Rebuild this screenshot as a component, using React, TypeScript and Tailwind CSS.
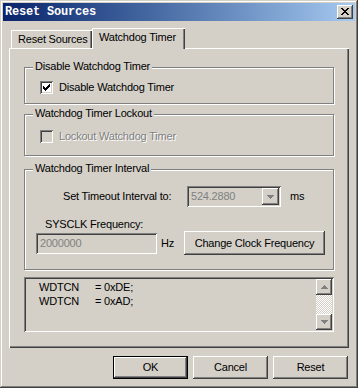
import React from "react";

const FONT = { fontFamily: '"Liberation Sans", Arial, sans-serif' };

const raised =
  "shadow-[inset_-1px_-1px_#404040,inset_1px_1px_#ffffff,inset_-2px_-2px_#808080,inset_2px_2px_#d4d0c8]";
const sunken =
  "shadow-[inset_1px_1px_#808080,inset_-1px_-1px_#ffffff,inset_2px_2px_#404040,inset_-2px_-2px_#d4d0c8]";

function CheckMark({ color }: { color: string }) {
  return (
    <svg width="13" height="13" viewBox="0 0 13 13" className="absolute left-0 top-0">
      <path
        fill={color}
        d="M3 5h1v3h-1z M4 6h1v3h-1z M5 7h1v3h-1z M6 6h1v3h-1z M7 5h1v3h-1z M8 4h1v3h-1z M9 3h1v3h-1z"
      />
    </svg>
  );
}

function Checkbox({ checked, disabled }: { checked?: boolean; disabled?: boolean }) {
  return (
    <div
      className={`relative w-[13px] h-[13px] shrink-0 ${disabled ? "bg-[#d4d0c8]" : "bg-white"} ${sunken}`}
    >
      {checked && <CheckMark color={disabled ? "#808080" : "#000"} />}
    </div>
  );
}

function Arrow({ dir, color }: { dir: "up" | "down"; color: string }) {
  const d =
    dir === "down"
      ? "M0 0h7v1h-7z M1 1h5v1h-5z M2 2h3v1h-3z M3 3h1v1h-1z"
      : "M3 0h1v1h-1z M2 1h3v1h-3z M1 2h5v1h-5z M0 3h7v1h-7z";
  return (
    <svg width="7" height="4" viewBox="0 0 7 4">
      <path fill={color} d={d} />
    </svg>
  );
}

function Group({
  title,
  className,
  children,
}: {
  title: string;
  className: string;
  children?: React.ReactNode;
}) {
  return (
    <div
      className={`relative border border-[#808080] shadow-[1px_1px_0_#ffffff,inset_1px_1px_0_#ffffff] ${className}`}
    >
      <span className="absolute left-[8px] top-[-8px] px-[2px] bg-[#d4d0c8] text-[11px] leading-[13px] text-black whitespace-nowrap">
        {title}
      </span>
      {children}
    </div>
  );
}

function Button({
  children,
  isDefault,
  className = "",
}: {
  children: React.ReactNode;
  isDefault?: boolean;
  className?: string;
}) {
  return (
    <div
      className={`flex items-center justify-center bg-[#d4d0c8] text-[11px] text-black ${
        isDefault
          ? "shadow-[inset_0_0_0_1px_#000000,inset_-2px_-2px_#404040,inset_2px_2px_#ffffff,inset_-3px_-3px_#808080]"
          : raised
      } ${className}`}
    >
      {children}
    </div>
  );
}

export default function App() {
  return (
    <div
      style={FONT}
      className="w-[358px] h-[388px] bg-[#d4d0c8] p-[3px] flex flex-col tracking-[-0.2px] shadow-[inset_-1px_-1px_#404040,inset_1px_1px_#d4d0c8,inset_-2px_-2px_#808080,inset_2px_2px_#ffffff]"
    >
      {/* Title bar */}
      <div className="h-[18px] flex items-center justify-between bg-gradient-to-r from-[#0a246a] to-[#a6caf0] pl-[2px] pr-[2px]">
        <span
          className="text-white font-bold text-[12px] leading-[18px] tracking-[-0.2px]"
          style={{ fontFamily: '"Liberation Mono", "Courier New", monospace' }}
        >
          Reset Sources
        </span>
        <div className={`relative w-[16px] h-[14px] bg-[#d4d0c8] ${raised}`}>
          <svg width="8" height="7" viewBox="0 0 8 7" className="absolute left-[4px] top-[3px]">
            <path
              fill="#000"
              d="M0 0h2v1h-2z M6 0h2v1h-2z M1 1h2v1h-2z M5 1h2v1h-2z M2 2h4v1h-4z M3 3h2v1h-2z M2 4h4v1h-4z M1 5h2v1h-2z M5 5h2v1h-2z M0 6h2v1h-2z M6 6h2v1h-2z"
            />
          </svg>
        </div>
      </div>

      {/* Body */}
      <div className="flex flex-col px-[6px] pt-[7px]">
        {/* Tabs */}
        <div className="flex items-end h-[20px] pl-[2px]">
          <div className="h-[18px] w-[81px] pl-[7px] flex items-center text-[11px] text-black shadow-[inset_1px_1px_#ffffff,inset_-1px_0_#404040,inset_-2px_0_#808080]">
            Reset Sources
          </div>
          <div className="relative z-10 mb-[-1px] h-[21px] w-[93px] pl-[7px] pb-[2px] flex items-center text-[11px] text-black bg-[#d4d0c8] shadow-[inset_1px_1px_#ffffff,inset_-1px_0_#404040,inset_-2px_0_#808080]">
            Watchdog Timer
          </div>
        </div>

        {/* Panel */}
        <div className="h-[300px] w-[340px] pt-[19px] px-[15px] flex flex-col shadow-[inset_1px_1px_#ffffff,inset_-1px_-1px_#404040,inset_-2px_-2px_#808080]">
          <Group title="Disable Watchdog Timer" className="h-[37px] shrink-0">
            <div className="flex items-center mt-[13px] ml-[15px] gap-[6px]">
              <Checkbox checked />
              <span className="text-[11px] leading-[13px] text-black">Disable Watchdog Timer</span>
            </div>
          </Group>

          <Group title="Watchdog Timer Lockout" className="h-[42px] mt-[10px] shrink-0">
            <div className="flex items-center mt-[15px] ml-[15px] gap-[6px]">
              <Checkbox disabled />
              <span className="text-[11px] leading-[13px] text-[#808080] [text-shadow:1px_1px_0_#ffffff]">
                Lockout Watchdog Timer
              </span>
            </div>
          </Group>

          <Group title="Watchdog Timer Interval" className="h-[101px] mt-[13px] shrink-0">
            <div className="flex items-center h-[21px] mt-[16px]">
              <span className="w-[124px] ml-[38px] text-[11px] text-black">Set Timeout Interval to:</span>
              <div className={`relative w-[94px] h-[21px] bg-[#d4d0c8] ${sunken} flex items-center`}>
                <span className="pl-[4px] text-[11px] text-[#808080]">524.2880</span>
                <div
                  className={`absolute right-[2px] top-[2px] w-[17px] h-[17px] bg-[#d4d0c8] flex items-center justify-center ${raised}`}
                >
                  <Arrow dir="down" color="#808080" />
                </div>
              </div>
              <span className="ml-[9px] text-[11px] text-black">ms</span>
            </div>
            <div className="mt-[11px] ml-[20px] h-[13px] leading-[13px] text-[11px] text-black">
              SYSCLK Frequency:
            </div>
            <div className="flex items-center mt-[0px] h-[24px]">
              <div className={`ml-[11px] w-[121px] h-[21px] flex items-center bg-[#d4d0c8] ${sunken}`}>
                <span className="pl-[4px] text-[11px] text-[#808080]">2000000</span>
              </div>
              <span className="ml-[4px] text-[11px] text-black">Hz</span>
              <Button className="ml-[10px] w-[141px] h-[24px]">Change Clock Frequency</Button>
            </div>
          </Group>

          <div className={`mt-[7px] h-[55px] shrink-0 flex p-[2px] bg-[#d4d0c8] ${sunken}`}>
            <div className="flex-1 pl-[13px] pt-[1px] text-[11px] leading-[14px] text-black">
              <div className="flex">
                <span className="w-[56px]">WDTCN</span>
                <span>= 0xDE;</span>
              </div>
              <div className="flex">
                <span className="w-[56px]">WDTCN</span>
                <span>= 0xAD;</span>
              </div>
            </div>
            <div className="w-[16px] flex flex-col">
              <div className={`h-[16px] flex items-center justify-center bg-[#d4d0c8] ${raised}`}>
                <Arrow dir="up" color="#808080" />
              </div>
              <div className="flex-1 [background-image:conic-gradient(#ffffff_25%,#d4d0c8_0_50%,#ffffff_0_75%,#d4d0c8_0)] [background-size:2px_2px]" />
              <div className={`h-[16px] flex items-center justify-center bg-[#d4d0c8] ${raised}`}>
                <Arrow dir="down" color="#808080" />
              </div>
            </div>
          </div>
        </div>

        {/* Buttons */}
        <div className="flex justify-end gap-[5px] mt-[8px] mr-[1px]">
          <Button isDefault className="w-[75px] h-[23px]">OK</Button>
          <Button className="w-[75px] h-[23px]">Cancel</Button>
          <Button className="w-[75px] h-[23px]">Reset</Button>
        </div>
      </div>
    </div>
  );
}
